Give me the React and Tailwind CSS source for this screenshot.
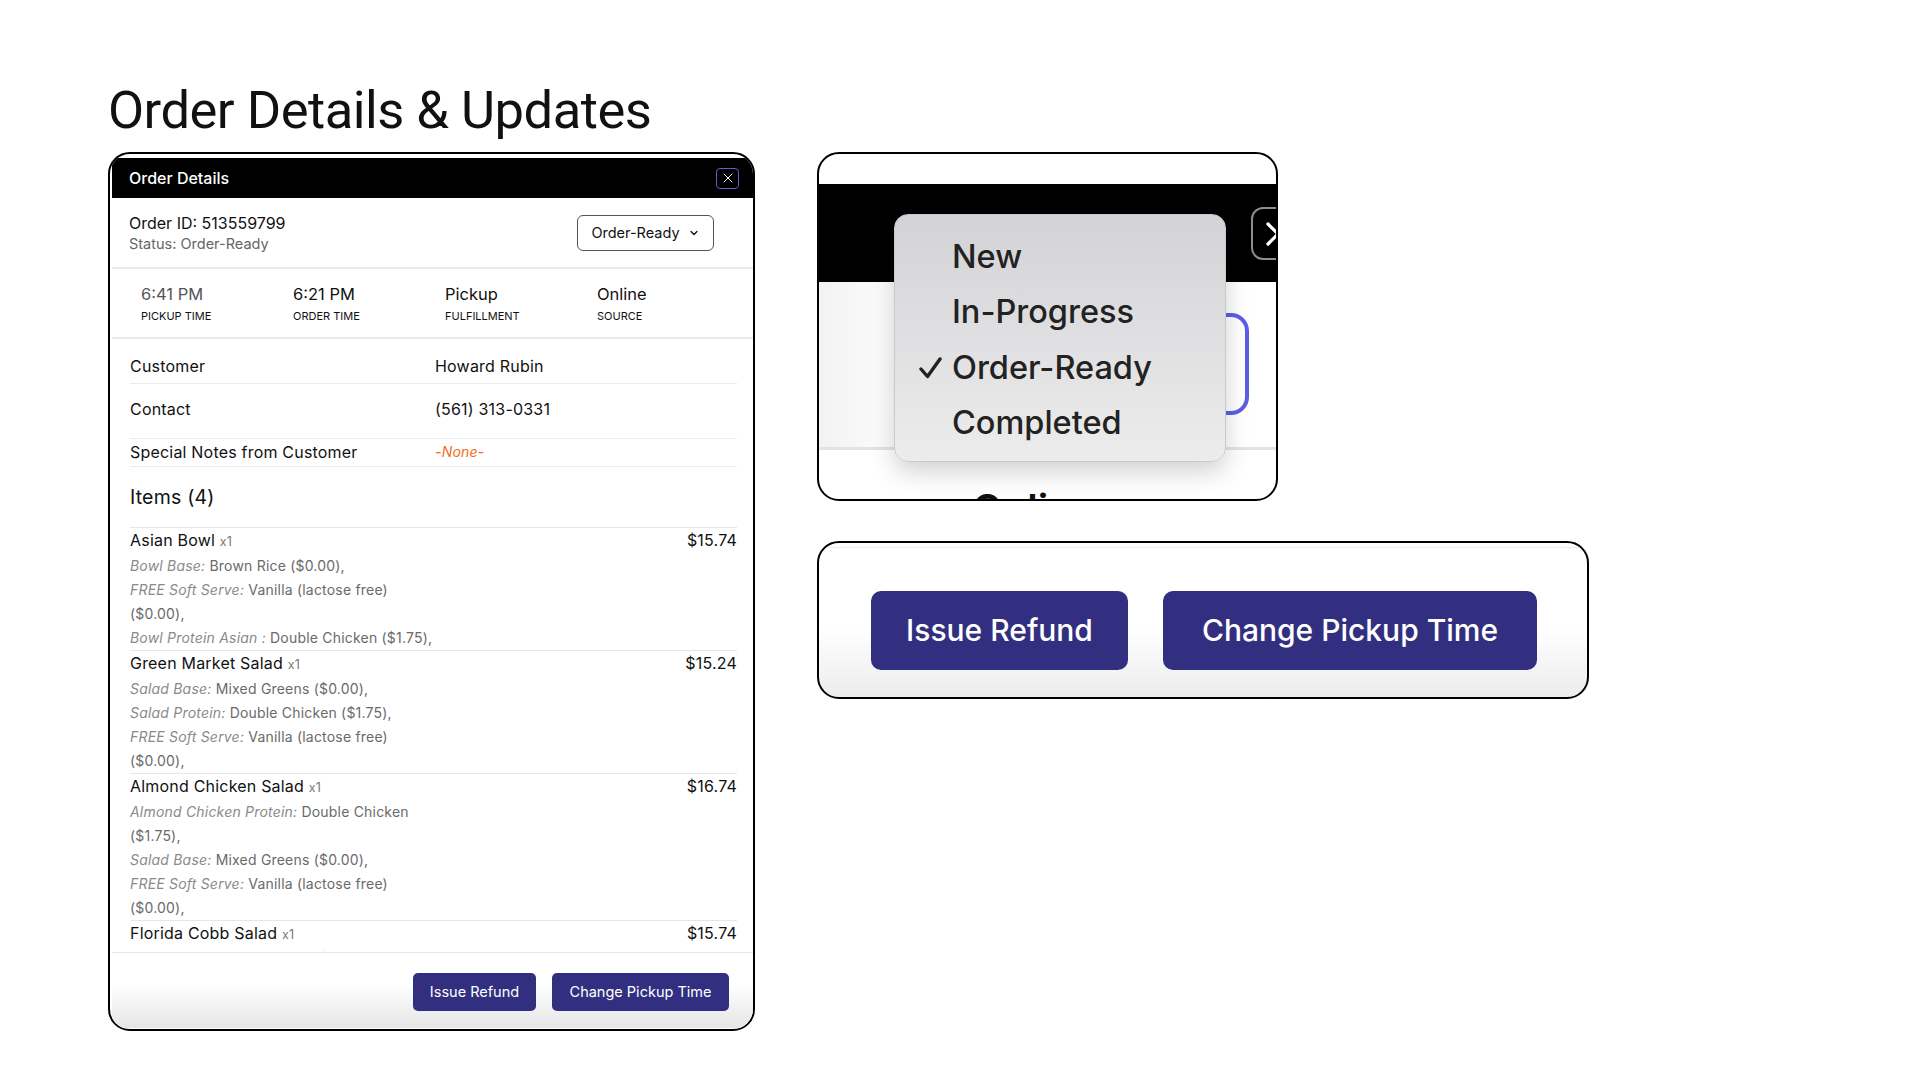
import { X, ChevronDown } from 'lucide-react'

const sans = { fontFamily: 'Inter, "Noto Sans", sans-serif' }

const stats = [
  { value: '6:41 PM', label: 'PICKUP TIME', muted: true },
  { value: '6:21 PM', label: 'ORDER TIME' },
  { value: 'Pickup', label: 'FULFILLMENT' },
  { value: 'Online', label: 'SOURCE' },
]

const items = [
  {
    name: 'Asian Bowl',
    price: '$15.74',
    lines: [
      ['Bowl Base:', 'Brown Rice ($0.00),'],
      ['FREE Soft Serve:', 'Vanilla (lactose free)'],
      [null, '($0.00),'],
      ['Bowl Protein Asian :', 'Double Chicken ($1.75),'],
    ],
  },
  {
    name: 'Green Market Salad',
    price: '$15.24',
    lines: [
      ['Salad Base:', 'Mixed Greens ($0.00),'],
      ['Salad Protein:', 'Double Chicken ($1.75),'],
      ['FREE Soft Serve:', 'Vanilla (lactose free)'],
      [null, '($0.00),'],
    ],
  },
  {
    name: 'Almond Chicken Salad',
    price: '$16.74',
    lines: [
      ['Almond Chicken Protein:', 'Double Chicken'],
      [null, '($1.75),'],
      ['Salad Base:', 'Mixed Greens ($0.00),'],
      ['FREE Soft Serve:', 'Vanilla (lactose free)'],
      [null, '($0.00),'],
    ],
  },
  {
    name: 'Florida Cobb Salad',
    price: '$15.74',
    lines: [['Salad Base:', 'Mixed Greens ($0.00),']],
  },
]

function OrderCard() {
  return (
    <div className="h-[879px] w-[647px] shrink-0 overflow-hidden rounded-[22px] border-2 border-black bg-white">
      <div className="ml-[2px] mt-[4px]">
        <div className="flex h-[40px] items-center justify-between bg-black pl-[17px] pr-[14px]">
          <span className="text-[16px] font-medium text-white">Order Details</span>
          <button className="flex h-[21px] w-[23px] items-center justify-center rounded-[4px] border border-[#5b5fc9]">
            <X size={16} strokeWidth={1.5} color="#fff" />
          </button>
        </div>

        <div className="flex h-[69px] items-center justify-between pl-[17px] pr-[39px]">
          <div>
            <p className="text-[16px] leading-[22px] text-[#111]">Order ID: 513559799</p>
            <p className="text-[14.5px] leading-[20px] text-[#666]">Status: Order-Ready</p>
          </div>
          <div className="flex h-[36px] w-[137px] items-center justify-center gap-[8px] rounded-[6px] border border-[#555] text-[14.5px] text-[#111]">
            Order-Ready
            <ChevronDown size={12} strokeWidth={2.5} />
          </div>
        </div>
        <div className="h-[2px] bg-[#e9e9e9]" />

        <div className="flex h-[68px] pl-[29px] pt-[14px]">
          {stats.map((s) => (
            <div key={s.label} className="w-[152px]">
              <p className={`text-[16.5px] leading-[22px] ${s.muted ? 'text-[#555]' : 'text-[#111]'}`}>{s.value}</p>
              <p className="mt-[4px] text-[11px] leading-[14px] text-[#111]">{s.label}</p>
            </div>
          ))}
        </div>
        <div className="h-[2px] bg-[#e9e9e9]" />

        <div className="pl-[18px] pr-[16px] tracking-[0.2px]">
          <div className="flex h-[45px] border-b border-[#ececec] pt-[15px] text-[16px] leading-[24px] text-[#111]">
            <span className="w-[305px]">Customer</span>
            <span>Howard Rubin</span>
          </div>
          <div className="flex h-[55px] border-b border-[#ececec] pt-[13px] text-[16px] leading-[24px] text-[#111]">
            <span className="w-[305px]">Contact</span>
            <span>(561) 313-0331</span>
          </div>
          <div className="flex h-[28px] border-b border-[#ececec] pt-[1px] text-[16px] leading-[24px] text-[#111]">
            <span className="w-[305px]">Special Notes from Customer</span>
            <span className="text-[14px] italic text-[#f26a1b]">-None-</span>
          </div>
          <div className="h-[60px] pt-[16px] text-[19.5px] leading-[28px] text-[#111]">Items (4)</div>

          <div className="h-[425px] overflow-hidden">
            {items.map((it) => (
              <div key={it.name} className="border-t border-[#e6e6e6]">
                <div className="flex justify-between text-[16px] leading-[24px] text-[#111]">
                  <span>
                    {it.name} <span className="text-[12.5px] text-[#777]">x1</span>
                  </span>
                  <span>{it.price}</span>
                </div>
                {it.lines.map(([k, v], i) => (
                  <p key={i} className="whitespace-nowrap text-[14px] leading-[24px] text-[#6a6a6a]">
                    {k && <span className="italic text-[#8a8a8a]">{k} </span>}
                    {v}
                  </p>
                ))}
              </div>
            ))}
          </div>
        </div>

        <div className="flex h-[76px] justify-end gap-[16px] border-t border-[#e8e8e8] bg-[linear-gradient(to_top,#e6e6e6,#ffffff_60%)] pr-[24px] pt-[20px]">
          <button className="h-[38px] w-[123px] rounded-[5px] bg-[#332f80] text-[14.5px] text-white">Issue Refund</button>
          <button className="h-[38px] w-[177px] rounded-[5px] bg-[#332f80] text-[14.5px] text-white">Change Pickup Time</button>
        </div>
      </div>
    </div>
  )
}

function StatusMenuCard() {
  return (
    <div className="relative h-[349px] w-[461px] overflow-hidden rounded-[22px] border-2 border-black bg-white">
      <div className="h-[30px]" />
      <div className="h-[98px] bg-black" />
      <div className="h-[165px] bg-[linear-gradient(to_right,#f2f2f2,#ffffff_20%)]" />
      <div className="h-[3px] bg-[#e3e3e3]" />

      <div className="absolute left-[432px] top-[53px] flex h-[53px] w-[53px] items-center justify-center rounded-[12px] border-2 border-[#8d8d8d]">
        <X size={40} strokeWidth={2} color="#fff" />
      </div>

      <div className="absolute left-[90px] top-[159px] h-[102px] w-[340px] rounded-[18px] border-4 border-[#5b5ee6]" />

      <span className="absolute left-[153px] top-[335px] text-[40px] font-semibold leading-none text-[#111]">Online</span>

      <div className="absolute left-[75px] top-[60px] h-[248px] w-[332px] rounded-[14px] border border-[#c9c9cc] bg-[linear-gradient(to_bottom,#d3d3d7,#ececec)] pl-[57px] pt-[14px] shadow-[0_10px_24px_rgba(0,0,0,0.18)]">
        {['New', 'In-Progress', 'Order-Ready', 'Completed'].map((o) => (
          <div key={o} className="relative text-[32.5px] font-medium leading-[55.3px] text-[#222]">
            {o === 'Order-Ready' && (
              <svg className="absolute left-[-33px] top-[17px]" width="23" height="22" viewBox="0 0 23 22">
                <path d="M2 12 L8.5 19.5 L21 2" fill="none" stroke="#222" strokeWidth="3.4" strokeLinecap="round" strokeLinejoin="round" />
              </svg>
            )}
            {o}
          </div>
        ))}
      </div>
    </div>
  )
}

function ActionsCard() {
  return (
    <div className="h-[158px] w-[772px] overflow-hidden rounded-[22px] border-2 border-black bg-[linear-gradient(to_top,#ececec,#ffffff_45%)]">
      <div className="mx-[4px] mt-[4px] h-px bg-[#ececec]" />
      <div className="flex gap-[35px] pl-[52px] pt-[43px]">
        <button className="h-[79px] w-[257px] rounded-[10px] bg-[#332f80] text-[30px] font-medium text-white">Issue Refund</button>
        <button className="h-[79px] w-[374px] rounded-[10px] bg-[#332f80] text-[30px] font-medium text-white">Change Pickup Time</button>
      </div>
    </div>
  )
}

export default function App() {
  return (
    <div className="h-[1080px] w-[1920px] overflow-hidden bg-white pl-[108px] pt-[83px]" style={sans}>
      <h1
        className="mb-[15px] text-[52.5px] leading-[54px] font-normal tracking-[-0.5px] text-[#111] [font-stretch:88%]"
        style={{ fontFamily: 'Roboto, "Liberation Sans", sans-serif' }}
      >
        Order Details &amp; Updates
      </h1>
      <div className="flex gap-[62px]">
        <OrderCard />
        <div className="flex flex-col gap-[40px]">
          <StatusMenuCard />
          <ActionsCard />
        </div>
      </div>
    </div>
  )
}
